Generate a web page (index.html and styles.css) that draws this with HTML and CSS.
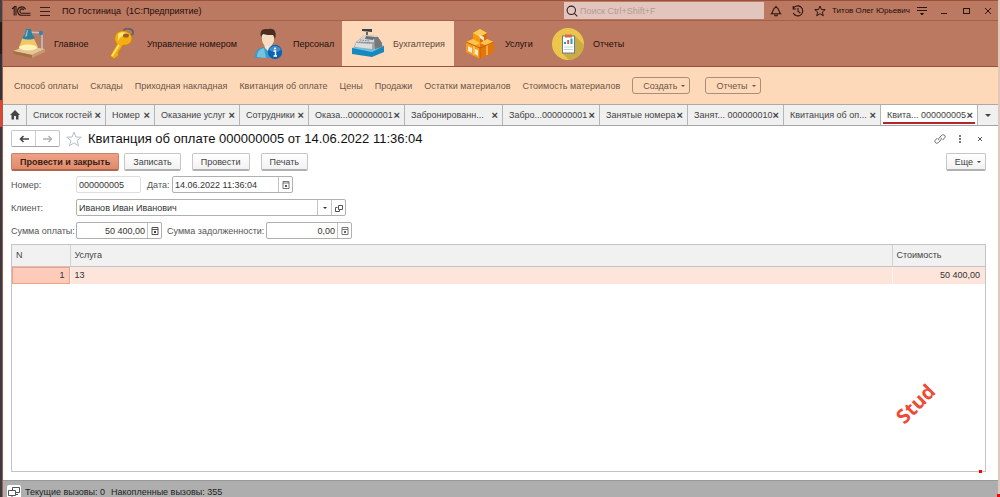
FILE: index.html
```html
<!DOCTYPE html>
<html lang="ru">
<head>
<meta charset="utf-8">
<title>ПО Гостиница</title>
<link rel="stylesheet" href="styles.css">
</head>
<body>
<div class="desktop">
<div class="app">
  <header class="titlebar">
    <svg class="logo" viewBox="0 0 20 12" width="20" height="12" fill="none" stroke="#2b1611" stroke-width="1.1"><path d="M1 4L3.200 2V10.500M5 10.500V1.500H3"/><path d="M14.600 4.200A4.200 4.200 0 1 0 11 10.300H19.500M13 5A2.200 2.200 0 1 0 11 8.300H19.500"/></svg>
    <button class="ghost" aria-label="Меню"><svg viewBox="0 0 10 10" width="10" height="10" stroke="#3a1f18"><path d="M0 1.5H10M0 5.5H10M0 9.5H10"/></svg></button>
    <h1 class="app-name">ПО Гостиница&nbsp; (1С:Предприятие)</h1>
    <label class="search">
      <svg viewBox="0 0 12 12" width="12" height="12" fill="none" stroke="#30221e" stroke-width="1.1"><circle cx="5.3" cy="5.3" r="4.2"/><path d="M8.3 8.3L11.3 11.3"/></svg>
      <input type="text" placeholder="Поиск Ctrl+Shift+F" aria-label="Поиск">
    </label>
    <div class="tools">
      <button class="ghost" aria-label="Уведомления"><svg viewBox="0 0 12 12" width="12" height="12" fill="none" stroke="#2b1611" stroke-width="1.1"><path d="M1.5 8.8C3.3 7.5 2.4 3 6 2.2C9.6 3 8.7 7.5 10.5 8.8Z"/><path d="M6 0.8V2M4.8 9.2V10.8H7.2V9.2"/></svg></button>
      <button class="ghost" aria-label="История"><svg viewBox="0 0 12 12" width="12" height="12" fill="none" stroke="#2b1611" stroke-width="1.1"><path d="M1.2 3.8A5 5 0 1 1 1.2 8M1.2 1V4H4.2M6 3V6.2L8.3 8"/></svg></button>
      <button class="ghost" aria-label="Избранное"><svg viewBox="0 0 12 12" width="12" height="12" fill="none" stroke="#2b1611"><path d="M6 1L7.4 4.5L11.2 4.7L8.3 7.1L9.3 10.8L6 8.7L2.7 10.8L3.7 7.1L0.8 4.7L4.6 4.5Z"/></svg></button>
      <span class="user">Титов Олег Юрьевич</span>
      <button class="ghost" aria-label="Настройки"><svg viewBox="0 0 12 12" width="12" height="12" stroke="#2b1611"><path d="M1 2.5H11M1 5.5H11"/><path d="M4.5 8.5H7.5L6 10Z" fill="#2b1611"/></svg></button>
      <button class="ghost" aria-label="Свернуть"><svg viewBox="0 0 12 12" width="12" height="12" stroke="#2b1611"><path d="M3 8.5H9"/></svg></button>
      <button class="ghost" aria-label="Развернуть"><svg viewBox="0 0 12 12" width="12" height="12" fill="none" stroke="#2b1611"><rect x="3.5" y="3.5" width="6" height="5"/></svg></button>
      <button class="ghost" aria-label="Закрыть"><svg viewBox="0 0 12 12" width="12" height="12" stroke="#2b1611"><path d="M3 3L9 9M9 3L3 9"/></svg></button>
    </div>
  </header>

  <nav class="sections" aria-label="Разделы">
    <button class="section">
      <svg viewBox="0 0 32 32" width="32" height="32"><path d="M0 23L13 18L32 21L19 27Z" fill="#e3c49b"/><path d="M0 23L19 27V30L1 26Z" fill="#a5713f"/><path d="M19 27L32 21V24L19 30Z" fill="#c99a66"/><path d="M10 9L6 19C7 23 22 24 25 19L20 9Z" fill="#efc765"/><ellipse cx="15" cy="19.500" rx="9" ry="3" fill="#fff3b4"/><path d="M15 4L29 5V21" fill="none" stroke="#b5c6ce" stroke-width="1.600"/><path d="M13 1H18L19 6L22 10C19 12 12 12 9 10L12 6Z" fill="#2f7f9f"/><path d="M14 2H15L14 8L12 9Z" fill="#8cc5d8"/><circle cx="28" cy="5" r="2.200" fill="#3b83a3"/></svg>
      <span>Главное</span></button>
    <button class="section">
      <svg viewBox="0 0 32 32" width="32" height="32"><path d="M17 4C18 -1 28 0 27 5C26 8 22 8 21 5" fill="none" stroke="#5f6266" stroke-width="1.8"/><path d="M11 5C16 0 26 4 26 10C26 16 20 18 17 17L12 25L13 27L8 31L4 28L11 16C8 13 8 8 11 5Z" fill="#f3ae12" stroke="#c77c06" stroke-width=".7"/><path d="M12 6C15 3 22 4 24 9C20 6 15 7 12 13Z" fill="#ffe476"/><path d="M13 17L6 28" stroke="#ffe476" stroke-width="1.8"/><ellipse cx="20" cy="7.5" rx="3" ry="2" fill="#9c5b2d"/></svg>
      <span>Управление номером</span></button>
    <button class="section">
      <svg viewBox="0 0 32 32" width="32" height="32"><path d="M3 30C2 22 7 20 13 19H19C24 20 27 24 26 30Z" fill="#3f9bc3"/><path d="M5 29C5 23 8 21 12 20L14 30Z" fill="#77c3de"/><path d="M12 16H20L19 20L16 23L13 20Z" fill="#f7e5ce"/><path d="M10 7C10 2 22 2 22 7V11C22 16 19 18 16 18C13 18 10 16 10 11Z" fill="#f6dcc0"/><path d="M9 9C7 0 13 1 17 1C23 0 25 5 23 11L21 7C17 7 14 7 11 6Z" fill="#4b2e22"/><circle cx="23" cy="24" r="7.2" fill="#0d61b1"/><path d="M17 22A6.5 6.5 0 0 1 29 22C25 25 20 24 17 22Z" fill="#3f8ed1"/><circle cx="23" cy="20.5" r="1.1" fill="#fff"/><path d="M21.5 23H23.5V28M21.5 28H25" fill="none" stroke="#fff" stroke-width="1.4"/></svg>
      <span>Персонал</span></button>
    <button class="section section-active" aria-current="page">
      <svg viewBox="0 0 32 32" width="32" height="32"><path d="M0 20L18 17L32 18V24L20 29L0 26Z" fill="#1588bd"/><path d="M0 20L20 24L32 18L30 17L13 19Z" fill="#65c4e8"/><path d="M10 1H20V4L10 3Z" fill="#3f4245"/><path d="M15 4V8" stroke="#666" stroke-width="2"/><path d="M4 14L12 7L25 8L30 15V19L20 22L2 19Z" fill="#a1a5a7"/><path d="M12 7L25 8L22 14L5 14Z" fill="#d5d7d7"/><path d="M22 9L26 9L30 15V19L23 21Z" fill="#75797c"/><path d="M14 8L23 9L21 12L13 11Z" fill="#6c7175"/><path d="M4 15L20 16V21L3 19Z" fill="#dcdddd"/><path d="M8 12L18 13M7 14L18 15" stroke="#888" stroke-dasharray="1.5 1"/></svg>
      <span>Бухгалтерия</span></button>
    <button class="section">
      <svg viewBox="0 0 32 32" width="32" height="32"><path d="M9 5L16 1L23 5V14L16 18L9 14Z" fill="#f7970c"/><path d="M9 5L16 1L23 5L16 9Z" fill="#ffc958"/><path d="M16 9L23 5V14L16 18Z" fill="#db6b05"/><path d="M2 14L9 11L16 15V31L2 24Z" fill="#fb9e15"/><path d="M16 15L23 11L30 14V24L16 31Z" fill="#e37509"/><path d="M2 14L9 11L16 15L10 18ZM16 15L23 11L30 14L23 18Z" fill="#ffc34b"/><path d="M2 14L16 20L30 14M16 19V31" fill="none" stroke="#c85a04"/><path d="M10 18V27M23 18V27" stroke="#ffcf5d" stroke-width="1.300"/><path d="M4 18L8 20V25L4 23ZM11 21L14 22V28L11 26ZM15 7L20 9V13L16 10Z" fill="#f4e9df"/></svg>
      <span>Услуги</span></button>
    <button class="section">
      <svg viewBox="0 0 32 32" width="32" height="32"><circle cx="16" cy="16" r="16" fill="#ecc64b"/><path d="M23 8L32 17C31 25 25 31 17 32L10 25Z" fill="#c9ac43"/><rect x="10.500" y="8" width="12" height="17" fill="#fff" stroke="#667f8b"/><rect x="13" y="6.5" width="7" height="3" fill="#d96852"/><path d="M13 16V14M19.500 16V10.500" stroke="#1ba5ac" stroke-width="2"/><path d="M16.200 16V12" stroke="#d9574b" stroke-width="2"/><path d="M12 19H21M12 21.500H21" stroke="#c6d3d8"/></svg>
      <span>Отчеты</span></button>
  </nav>

  <nav class="commands" aria-label="Команды раздела">
    <a href="#">Способ оплаты</a><a href="#">Склады</a><a href="#">Приходная накладная</a><a href="#">Квитанция об оплате</a><a href="#">Цены</a><a href="#">Продажи</a><a href="#">Остатки материалов</a><a href="#">Стоимость материалов</a>
    <div class="command-menus">
      <button class="command-menu">Создать<i class="caret"></i></button>
      <button class="command-menu">Отчеты<i class="caret"></i></button>
    </div>
  </nav>

  <nav class="tabs" aria-label="Открытые окна">
    <button class="home" aria-label="Начальная страница"><svg viewBox="0 0 10 10" width="10" height="10" fill="#444"><path d="M5 0L10 5H8.500V9.500H6V6H4V9.500H1.500V5H0Z"/></svg></button>
    <button class="tab"><span>Список гостей</span><b class="x">×</b></button>
    <button class="tab"><span>Номер</span><b class="x">×</b></button>
    <button class="tab"><span>Оказание услуг</span><b class="x">×</b></button>
    <button class="tab"><span>Сотрудники</span><b class="x">×</b></button>
    <button class="tab"><span>Оказа...000000001</span><b class="x">×</b></button>
    <button class="tab"><span>Забронированн...</span><b class="x">×</b></button>
    <button class="tab"><span>Забро...000000001</span><b class="x">×</b></button>
    <button class="tab"><span>Занятые номера</span><b class="x">×</b></button>
    <button class="tab"><span>Занят... 000000010</span><b class="x">×</b></button>
    <button class="tab"><span>Квитанция об оп...</span><b class="x">×</b></button>
    <button class="tab tab-active"><span>Квита... 000000005</span><b class="x">×</b></button>
    <button class="home" aria-label="Все окна"><i class="caret caret-big"></i></button>
  </nav>

  <main class="content">
    <div class="heading">
      <div class="history">
        <button aria-label="Назад"><svg viewBox="0 0 10 8" width="10" height="8" fill="none" stroke="#444" stroke-width="1.6"><path d="M10 4H2M4.500 1L1.500 4L4.500 7"/></svg></button>
        <button aria-label="Вперед"><svg viewBox="0 0 10 8" width="10" height="8" fill="none" stroke="#b0b0b0" stroke-width="1.400"><path d="M0 4H8M5.500 1L8.500 4L5.500 7"/></svg></button>
      </div>
      <button class="ghost" aria-label="В избранное"><svg viewBox="0 0 16 16" width="16" height="16" fill="#fff" stroke="#b9bfc5"><path d="M8 1L9.900 6L15.300 6.200L11.100 9.500L12.500 14.800L8 11.800L3.500 14.800L4.900 9.500L0.700 6.200L6.100 6Z"/></svg></button>
      <h2 class="title">Квитанция об оплате 000000005 от 14.06.2022 11:36:04</h2>
      <div class="heading-tools">
        <button class="ghost" aria-label="Ссылка"><svg viewBox="0 0 12 12" width="12" height="12" fill="none" stroke="#666"><path d="M5 7.300C4 6 5 5 7.500 2.500C9.500 0.500 12.500 3 10.500 5L8.500 7M7 4.700C8 6 7 7 4.500 9.500C2.500 11.500 -0.500 9 1.500 7L3.500 5"/></svg></button>
        <button class="ghost" aria-label="Меню формы"><svg viewBox="0 0 12 12" width="12" height="12" fill="#777"><path d="M5 2H7V4H5ZM5 5H7V7H5ZM5 8H7V10H5Z"/></svg></button>
        <button class="ghost" aria-label="Закрыть форму"><svg viewBox="0 0 12 12" width="12" height="12" stroke="#555"><path d="M4 4L8 8M8 4L4 8"/></svg></button>
      </div>
    </div>

    <div class="actions">
      <button class="btn btn-primary">Провести и закрыть</button>
      <button class="btn btn-save">Записать</button>
      <button class="btn btn-post">Провести</button>
      <button class="btn">Печать</button>
      <button class="btn btn-more">Еще<i class="caret"></i></button>
    </div>

    <form class="form">
      <div class="row">
        <label class="first" for="number">Номер:</label>
        <span class="field field-number"><input id="number" type="text" value="000000005" readonly></span>
        <label class="date-label" for="date">Дата:</label>
        <span class="field field-date"><input id="date" type="text" value="14.06.2022 11:36:04"><button type="button" aria-label="Календарь"><svg viewBox="0 0 8 8" width="8" height="8" fill="none" stroke="#777"><path d="M1 .5H7V7.500H1ZM1 2H7"/><path d="M3 4H5V6H3Z" fill="#555" stroke="none"/></svg></button></span>
      </div>
      <div class="row">
        <label class="first" for="client">Клиент:</label>
        <span class="field field-client"><input id="client" type="text" value="Иванов Иван Иванович"><button type="button" aria-label="Выбрать"><i class="caret"></i></button><button type="button" aria-label="Открыть"><svg viewBox="0 0 8 8" width="8" height="8" fill="none" stroke="#555"><path d="M3.500 1.500H7.500V5.500H3.500ZM2.500 3.500H.5V7.500H4.500V6"/></svg></button></span>
      </div>
      <div class="row">
        <label class="first" for="sum">Сумма оплаты:</label>
        <span class="field field-sum"><input id="sum" type="text" value="50 400,00"><button type="button" aria-label="Калькулятор"><svg viewBox="0 0 8 8" width="8" height="8" fill="none" stroke="#555"><path d="M1 .5H7V7.500H1ZM1 2.500H7"/><path d="M3 4H5V6H3Z" fill="#444" stroke="none"/></svg></button></span>
        <label class="debt-label" for="debt">Сумма задолженности:</label>
        <span class="field field-sum"><input id="debt" type="text" value="0,00"><button type="button" aria-label="Калькулятор"><svg viewBox="0 0 8 8" width="8" height="8" fill="none" stroke="#777"><path d="M1 .5H7V7.500H1ZM1 2.500H7"/><path d="M3 4H5V6H3Z" fill="#666" stroke="none"/></svg></button></span>
      </div>
    </form>

    <div class="grid">
      <table>
        <thead><tr><th class="col-n">N</th><th>Услуга</th><th class="col-cost">Стоимость</th></tr></thead>
        <tbody><tr><td class="current num">1</td><td>13</td><td class="num">50 400,00</td></tr></tbody>
      </table>
      <i class="marker"></i>
    </div>
    <div class="watermark">Stud</div>
  </main>

  <footer class="status">
    <button class="status-icon" aria-label="Окна"><svg viewBox="0 0 12 12" width="12" height="12" fill="#fff" stroke="#555"><path d="M4.500 1.500H11.500V6.500H4.500Z"/><path d="M.5 4.500H7.500V9.500H.5ZM2 11.500H6M4 9.500V11.500M8 8.500H10"/></svg></button>
    <span>Текущие вызовы: 0</span><span>Накопленные вызовы: 355</span>
  </footer>
</div>
<i class="marker marker-corner"></i>
</div>
</body>
</html>
```
FILE: styles.css
```css
* { box-sizing: border-box; }
body { margin: 0; font: 9px/12px "Liberation Sans", Arial, sans-serif; color: #444; }
button, input { font: inherit; color: inherit; margin: 0; padding: 0; border: 0; background: none; }
button { display: flex; align-items: center; justify-content: center; white-space: nowrap; }
svg { display: block; flex: none; }
h1, h2 { margin: 0; font-weight: normal; }
a { color: inherit; text-decoration: none; }
input { min-width: 0; outline: none; }

.desktop {
  position: relative; display: flex; min-height: 100vh; padding: 0 2px;
  background: linear-gradient(#3c414b 0 22px, #211d1f 22px 54px, #30343e 54px 100px, #dc4735 100px 127px, #393b40 127px) left / 2px 100% no-repeat, #e0c8bd;
}
.app { flex: 1; min-width: 0; display: flex; flex-direction: column; background: #fff; border-left: 1px solid #a65a42; }
.caret { flex: none; border: 2px solid transparent; border-top-color: currentColor; border-bottom: 0; }
.caret-big { border-width: 3px; border-bottom: 0; }

.titlebar { display: flex; align-items: center; height: 21px; padding: 0 4px 0 8px; background: #bc7962; border-top: 1px solid #99503c; border-bottom: 1px solid #a75f4a; color: #210f0a; }
.logo { margin-right: 9px; }
.app-name { flex: 1; margin-left: 12px; font-size: 9px; white-space: nowrap; }
.search { display: flex; align-items: center; gap: 2px; width: 200px; height: 17px; padding: 0 2px; background: #e2c5bd; }
.search input { flex: 1; }
.search input::placeholder { color: #b39b95; opacity: 1; }
.tools { display: flex; align-items: center; gap: 10px; margin-left: 6px; }
.user { margin: 0 -4px; font-size: 8px; white-space: nowrap; }

.sections { display: grid; grid-template-columns: 93px 146px 100px 112px 88px 96px; height: 46px; background: #bc7962; border-bottom: 1px solid #99503c; color: #210f0a; }
.section { justify-content: flex-start; gap: 9px; padding: 0 0 0 10px; }
.section-active { background: #fed9b9; color: #5c463b; }

.commands { display: flex; align-items: center; gap: 12px; height: 37px; padding: 0 11px; background: #fed9b9; color: #6c5547; white-space: nowrap; }
.command-menus { display: flex; gap: 15px; }
.command-menu { gap: 4px; height: 17px; padding: 0 4px 0 10px; border: 1px solid #a98e7a; border-radius: 3px; }

.tabs { display: grid; grid-template-columns: 23px 79fr 49fr 85fr 69fr 96fr 98fr 97fr 88fr 96fr 97fr 97fr 21px; height: 22px; background: #f0f0f0; border-top: 1px solid #b0a8a2; border-bottom: 1px solid #a4a4a4; }
.tab { min-width: 0; justify-content: space-between; padding: 0 4px 0 6px; border-left: 1px solid #b5b5b5; }
.tab-active { background: linear-gradient(#b3262e, #b3262e) center bottom 1px / 92px 2px no-repeat, #fff; }
.home:last-child { border-left: 1px solid #b5b5b5; }
.x { flex: none; font-size: 11px; }

.content { position: relative; flex: 1; display: flex; flex-direction: column; padding: 4px 12px 8px 8px; }
.heading { display: flex; align-items: center; height: 17px; gap: 6px; }
.history { display: flex; width: 49px; height: 17px; border: 1px solid #c6c6c6; border-bottom-color: #a5a5a5; border-radius: 2px; }
.history button { flex: 1; }
.history button + button { border-left: 1px solid #ccc; }
.title { flex: 1; font-size: 13px; line-height: 16px; color: #111; }
.heading-tools { display: flex; gap: 8px; }

.actions { display: flex; gap: 5px; margin-top: 6px; }
.btn { height: 18px; padding: 0 8px; border: 1px solid #c6c6c6; border-bottom: 2px solid #b0b0b0; border-radius: 2px; background: linear-gradient(#fff, #f2f2f2); }
.btn-primary { border-color: #c98268; border-bottom-color: #ad6850; background: linear-gradient(#eda287, #e18a6b); color: #3b1e14; font-weight: bold; }
.btn-save, .btn-post { margin-right: 6px; }
.btn-more { gap: 4px; margin-left: auto; padding: 0 4px 0 8px; }

.form { display: flex; flex-direction: column; gap: 6px; margin-top: 5px; color: #555; }
.row { display: flex; align-items: center; white-space: nowrap; }
.first { width: 65px; }
.field { display: flex; height: 17px; border: 1px solid #b0b0b0; border-radius: 2px; color: #333; }
.field input { flex: 1; padding: 0 2px; }
.field button { width: 14px; border-left: 1px solid #c4c4c4; }
.field-number { width: 65px; border-color: #ddd; }
.field-date { width: 121px; }
.field-client { width: 270px; }
.field-sum { width: 86px; }
.field-sum input { text-align: right; }
.date-label { width: 25px; margin-left: 6px; }
.debt-label { width: 99px; margin-left: 5px; }

.grid { position: relative; flex: 1; margin-top: 5px; border: 1px solid #c4c4c4; }
table { width: 100%; table-layout: fixed; border-collapse: collapse; }
th, td { padding: 0 5px 0 4px; text-align: left; font-weight: normal; }
th { height: 21px; background: #f1f1f1; border-right: 1px solid #d2d2d2; border-bottom: 1px solid #c4c4c4; }
th:last-child { border-right: 0; }
td { height: 18px; background: #fee5dc; border-right: 1px solid #fff3ee; color: #333; }
td:last-child { border-right: 0; }
.num { text-align: right; }
.current { background: #fdcbb9; box-shadow: inset 0 0 0 1px #f79f80; }
.col-n { width: 58px; }
.col-cost { width: 93px; }
.marker { position: absolute; right: 3px; bottom: -2px; width: 3px; height: 3px; background: #f00; }
.marker-corner { right: 0; bottom: 0; }
.watermark { position: absolute; right: 60px; bottom: 64px; font: 700 20px/24px "Open Sans", sans-serif; color: #ef4a35; transform: rotate(-45deg); }

.status { display: flex; align-items: center; gap: 6px; height: 17px; padding: 5px 4px 0; background: #aeaeae; border-top: 1px solid #999; color: #222; overflow: hidden; }
.status-icon { width: 14px; height: 14px; margin-right: -2px; background: #fff; border-radius: 2px; }
```
